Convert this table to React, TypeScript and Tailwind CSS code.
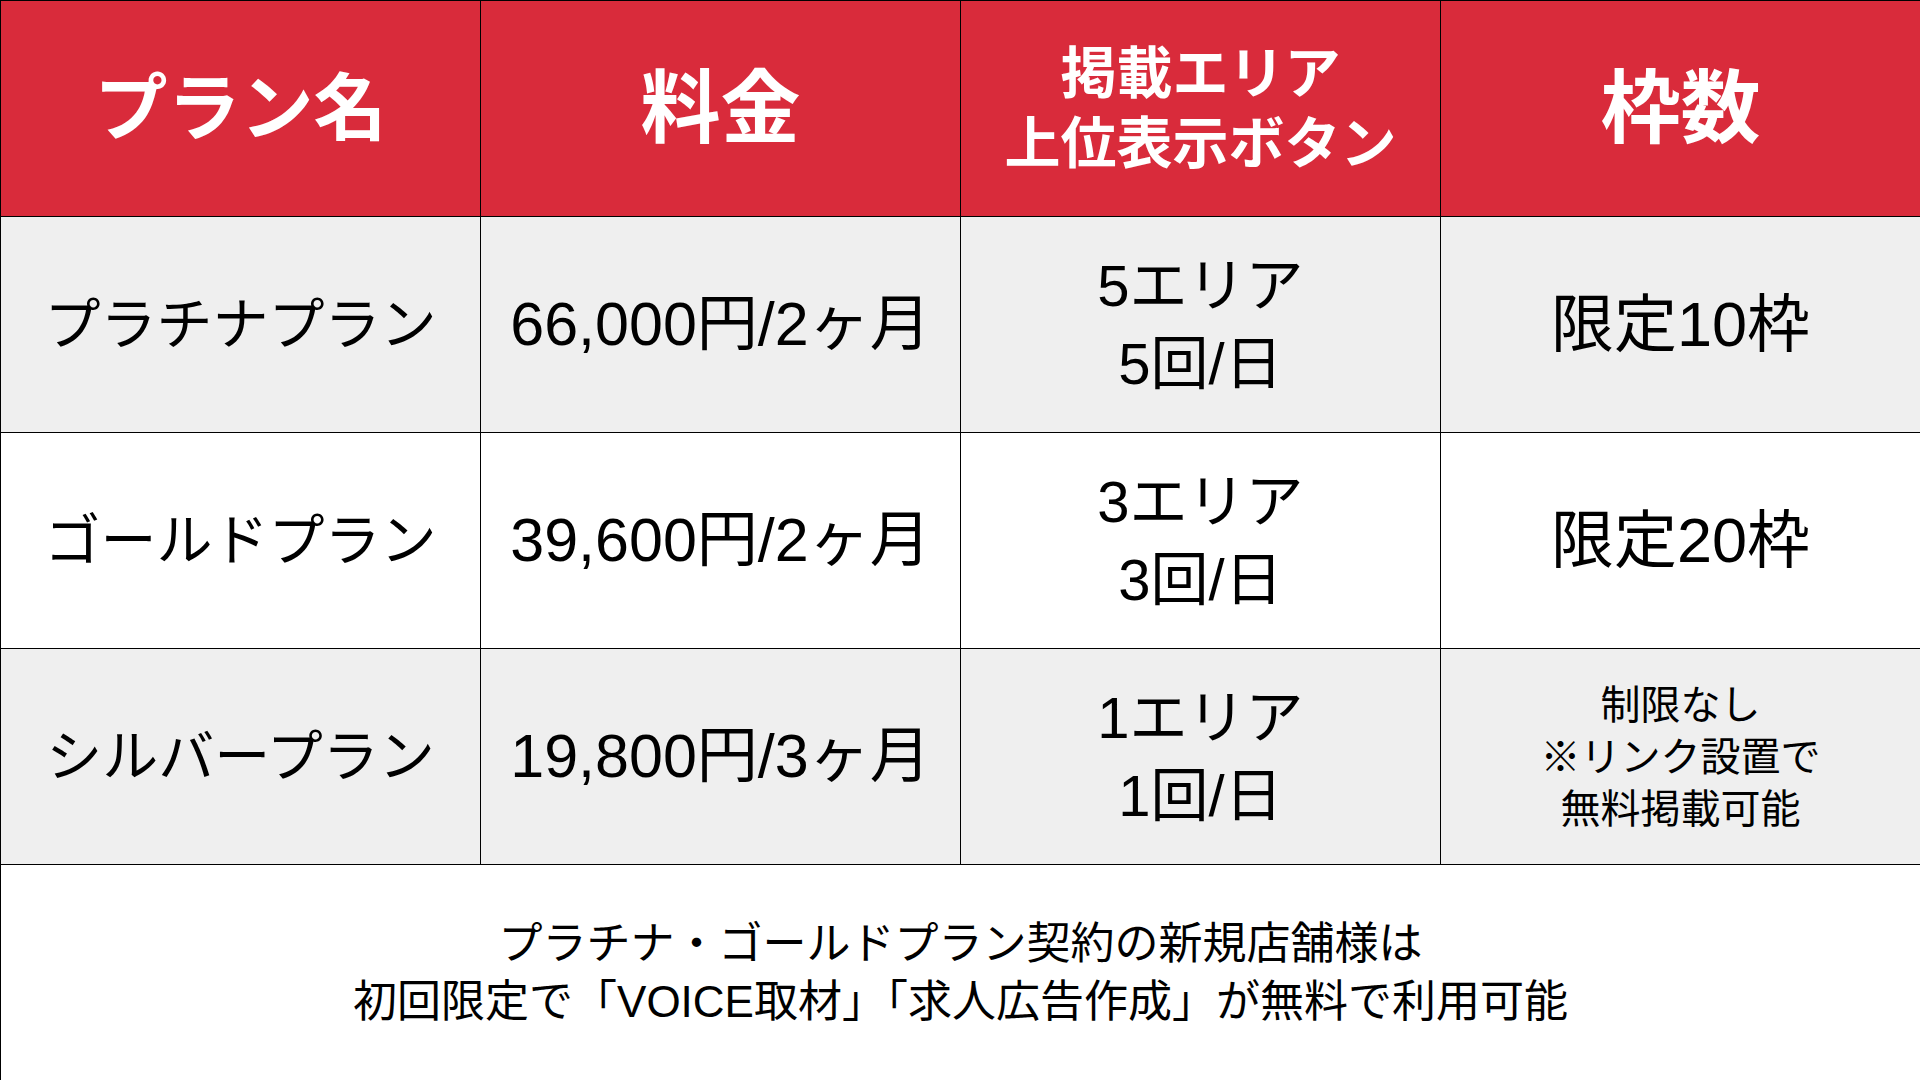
import React from "react";

const rows = [
  {
    name: "プラチナプラン",
    price: "66,000円/2ヶ月",
    area: ["5エリア", "5回/日"],
    slots: "限定10枠",
    bg: "bg-[#efefef]",
  },
  {
    name: "ゴールドプラン",
    price: "39,600円/2ヶ月",
    area: ["3エリア", "3回/日"],
    slots: "限定20枠",
    bg: "bg-white",
  },
  {
    name: "シルバープラン",
    price: "19,800円/3ヶ月",
    area: ["1エリア", "1回/日"],
    slots: null,
    bg: "bg-[#efefef]",
  },
];

export default function App() {
  return (
    <div className="w-[1920px] h-[1080px] overflow-hidden bg-white font-['Liberation_Sans','Noto_Sans_CJK_JP',sans-serif] text-black">
      <div className="grid h-full w-full grid-cols-4 grid-rows-5 gap-px bg-black pt-px pl-px">
        <div className="flex items-center justify-center bg-[#d92b3b] text-[73px] font-bold leading-none text-white">
          プラン名
        </div>
        <div className="flex items-center justify-center bg-[#d92b3b] text-[80px] font-bold leading-none text-white">
          料金
        </div>
        <div className="flex flex-col items-center justify-center bg-[#d92b3b] text-[56px] font-bold leading-[70px] text-white">
          <span>掲載エリア</span>
          <span>上位表示ボタン</span>
        </div>
        <div className="flex items-center justify-center bg-[#d92b3b] text-[80px] font-bold leading-none text-white">
          枠数
        </div>

        {rows.map((r) => (
          <React.Fragment key={r.name}>
            <div className={`flex items-center justify-center ${r.bg} text-[56px] leading-none`}>
              {r.name}
            </div>
            <div className={`flex items-center justify-center ${r.bg} text-[61px] leading-none`}>
              {r.price}
            </div>
            <div className={`flex flex-col items-center justify-center ${r.bg} text-[58px] leading-[78px]`}>
              <span>{r.area[0]}</span>
              <span>{r.area[1]}</span>
            </div>
            {r.slots ? (
              <div className={`flex items-center justify-center ${r.bg} text-[63px] leading-none`}>
                {r.slots}
              </div>
            ) : (
              <div className={`flex flex-col items-center justify-center ${r.bg} text-[40px] leading-[52px]`}>
                <span>制限なし</span>
                <span>※リンク設置で</span>
                <span>無料掲載可能</span>
              </div>
            )}
          </React.Fragment>
        ))}

        <div className="col-span-4 flex flex-col items-center justify-center bg-white text-[44px] leading-[58px]">
          <span>プラチナ・ゴールドプラン契約の新規店舗様は</span>
          <span>初回限定で「VOICE取材」「求人広告作成」が無料で利用可能</span>
        </div>
      </div>
    </div>
  );
}
